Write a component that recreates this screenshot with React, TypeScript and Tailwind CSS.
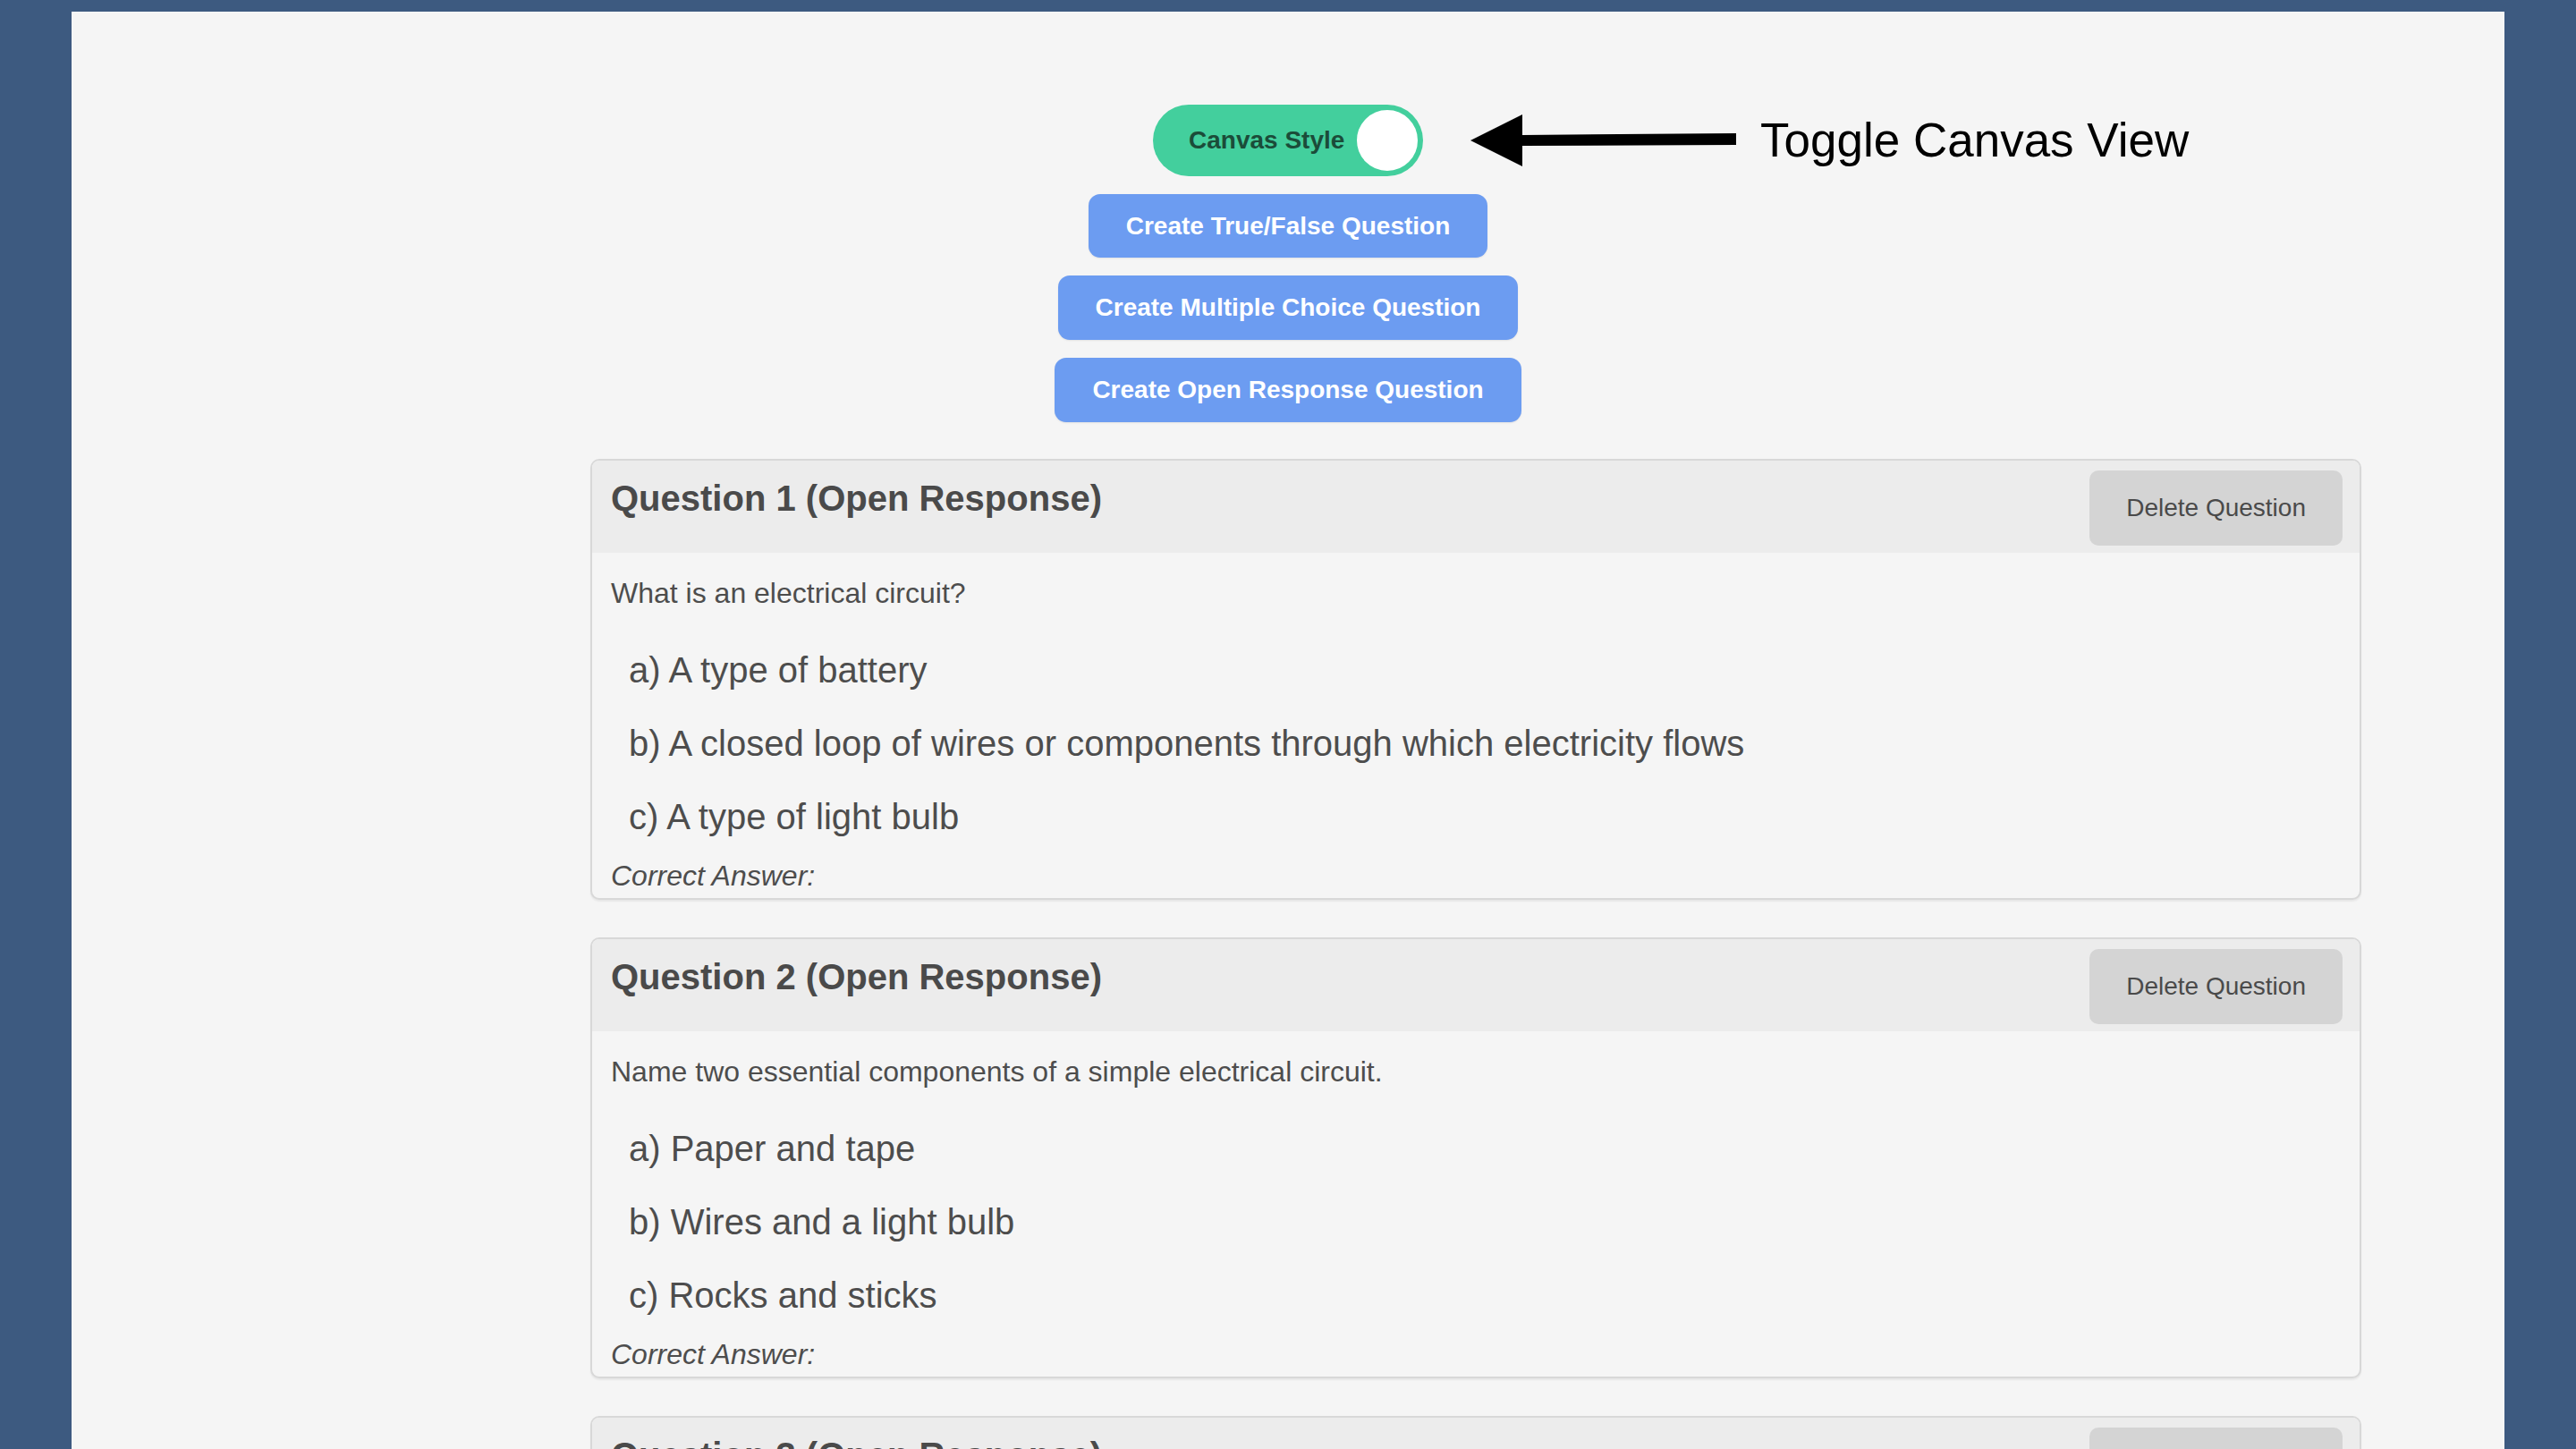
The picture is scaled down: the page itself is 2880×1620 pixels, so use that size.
import React, { useState } from 'react'

const questions = [
  {
    title: 'Question 1 (Open Response)',
    text: 'What is an electrical circuit?',
    options: [
      'a) A type of battery',
      'b) A closed loop of wires or components through which electricity flows',
      'c) A type of light bulb',
    ],
  },
  {
    title: 'Question 2 (Open Response)',
    text: 'Name two essential components of a simple electrical circuit.',
    options: ['a) Paper and tape', 'b) Wires and a light bulb', 'c) Rocks and sticks'],
  },
  {
    title: 'Question 3 (Open Response)',
    text: 'What does a switch do in a circuit?',
    options: ['a) Makes the wires longer', 'b) Opens or closes the circuit', 'c) Changes the color of the bulb'],
  },
]

function QuestionCard({ title, text, options }: { title: string; text: string; options: string[] }) {
  return (
    <div className="ml-[580px] w-[1980px] rounded-[10px] border-2 border-[#d8d8d8] bg-[#f5f5f5] shadow-[0_2px_2px_rgba(0,0,0,0.06)] overflow-hidden">
      <div className="flex items-start justify-between bg-[#ececec] pl-[21px] pr-[19px] pt-[11px] pb-[8px]">
        <h3 className="pt-[8px] text-[40px] leading-[46px] font-bold text-[#4a4a4a]">{title}</h3>
        <button className="h-[84px] rounded-[10px] bg-[#d4d4d4] px-[41px] text-[28px] text-[#4a4a4a]">
          Delete Question
        </button>
      </div>
      <div className="pl-[21px] pr-5 pt-[27px] pb-[6px]">
        <p className="text-[32px] leading-[37px] text-[#4d4d4d]">{text}</p>
        <ul className="mt-[44px] flex flex-col gap-[36px] pl-[20px]">
          {options.map((o) => (
            <li key={o} className="text-[40px] leading-[46px] text-[#4d4d4d]">
              {o}
            </li>
          ))}
        </ul>
        <p className="mt-[25px] text-[32px] leading-[37px] italic text-[#4d4d4d]">Correct Answer:</p>
      </div>
    </div>
  )
}

export default function App() {
  const [canvas, setCanvas] = useState(true)

  return (
    <div
      className="min-h-screen bg-[#3d5a80] pt-[13px] px-[80px] overflow-hidden h-[1620px]"
      style={{ fontFamily: '"Liberation Sans", Arial, sans-serif' }}
    >
      <div className="h-full bg-[#f5f5f5] pt-[104px]">
        <div className="flex flex-col items-center gap-[20px]">
          <div className="relative">
            <button
              onClick={() => setCanvas(!canvas)}
              className="flex h-[80px] w-[302px] items-center rounded-full bg-[#43cf9d] pl-[40px] pr-[3px]"
            >
              <span className="flex-1 text-left text-[28px] font-bold text-[#1b4c39]">Canvas Style</span>
              <span className="h-[74px] w-[74px] rounded-full border-[3px] border-[#43cf9d] bg-white" />
            </button>
            <div className="absolute left-[355px] top-[10px] flex items-center gap-[26px] whitespace-nowrap">
              <svg width="298" height="58" viewBox="0 0 298 58">
                <polygon points="0,29 58,0 58,23 297,21 297,34 58,35 58,58" fill="#000" />
              </svg>
              <span className="text-[53px] leading-[60px] text-black">Toggle Canvas View</span>
            </div>
          </div>
          <button className="h-[71px] rounded-[13px] bg-[#6c9cf1] px-[42px] text-[28px] font-bold text-white shadow-[0_1px_2px_rgba(0,0,0,0.08)]">
            Create True/False Question
          </button>
          <button className="h-[72px] rounded-[13px] bg-[#6c9cf1] px-[42px] text-[28px] font-bold text-white shadow-[0_1px_2px_rgba(0,0,0,0.08)]">
            Create Multiple Choice Question
          </button>
          <button className="h-[72px] rounded-[13px] bg-[#6c9cf1] px-[42px] text-[28px] font-bold text-white shadow-[0_1px_2px_rgba(0,0,0,0.08)]">
            Create Open Response Question
          </button>
        </div>
        <div className="mt-[41px] flex flex-col gap-[42px]">
          {questions.map((q) => (
            <QuestionCard key={q.title} {...q} />
          ))}
        </div>
      </div>
    </div>
  )
}
